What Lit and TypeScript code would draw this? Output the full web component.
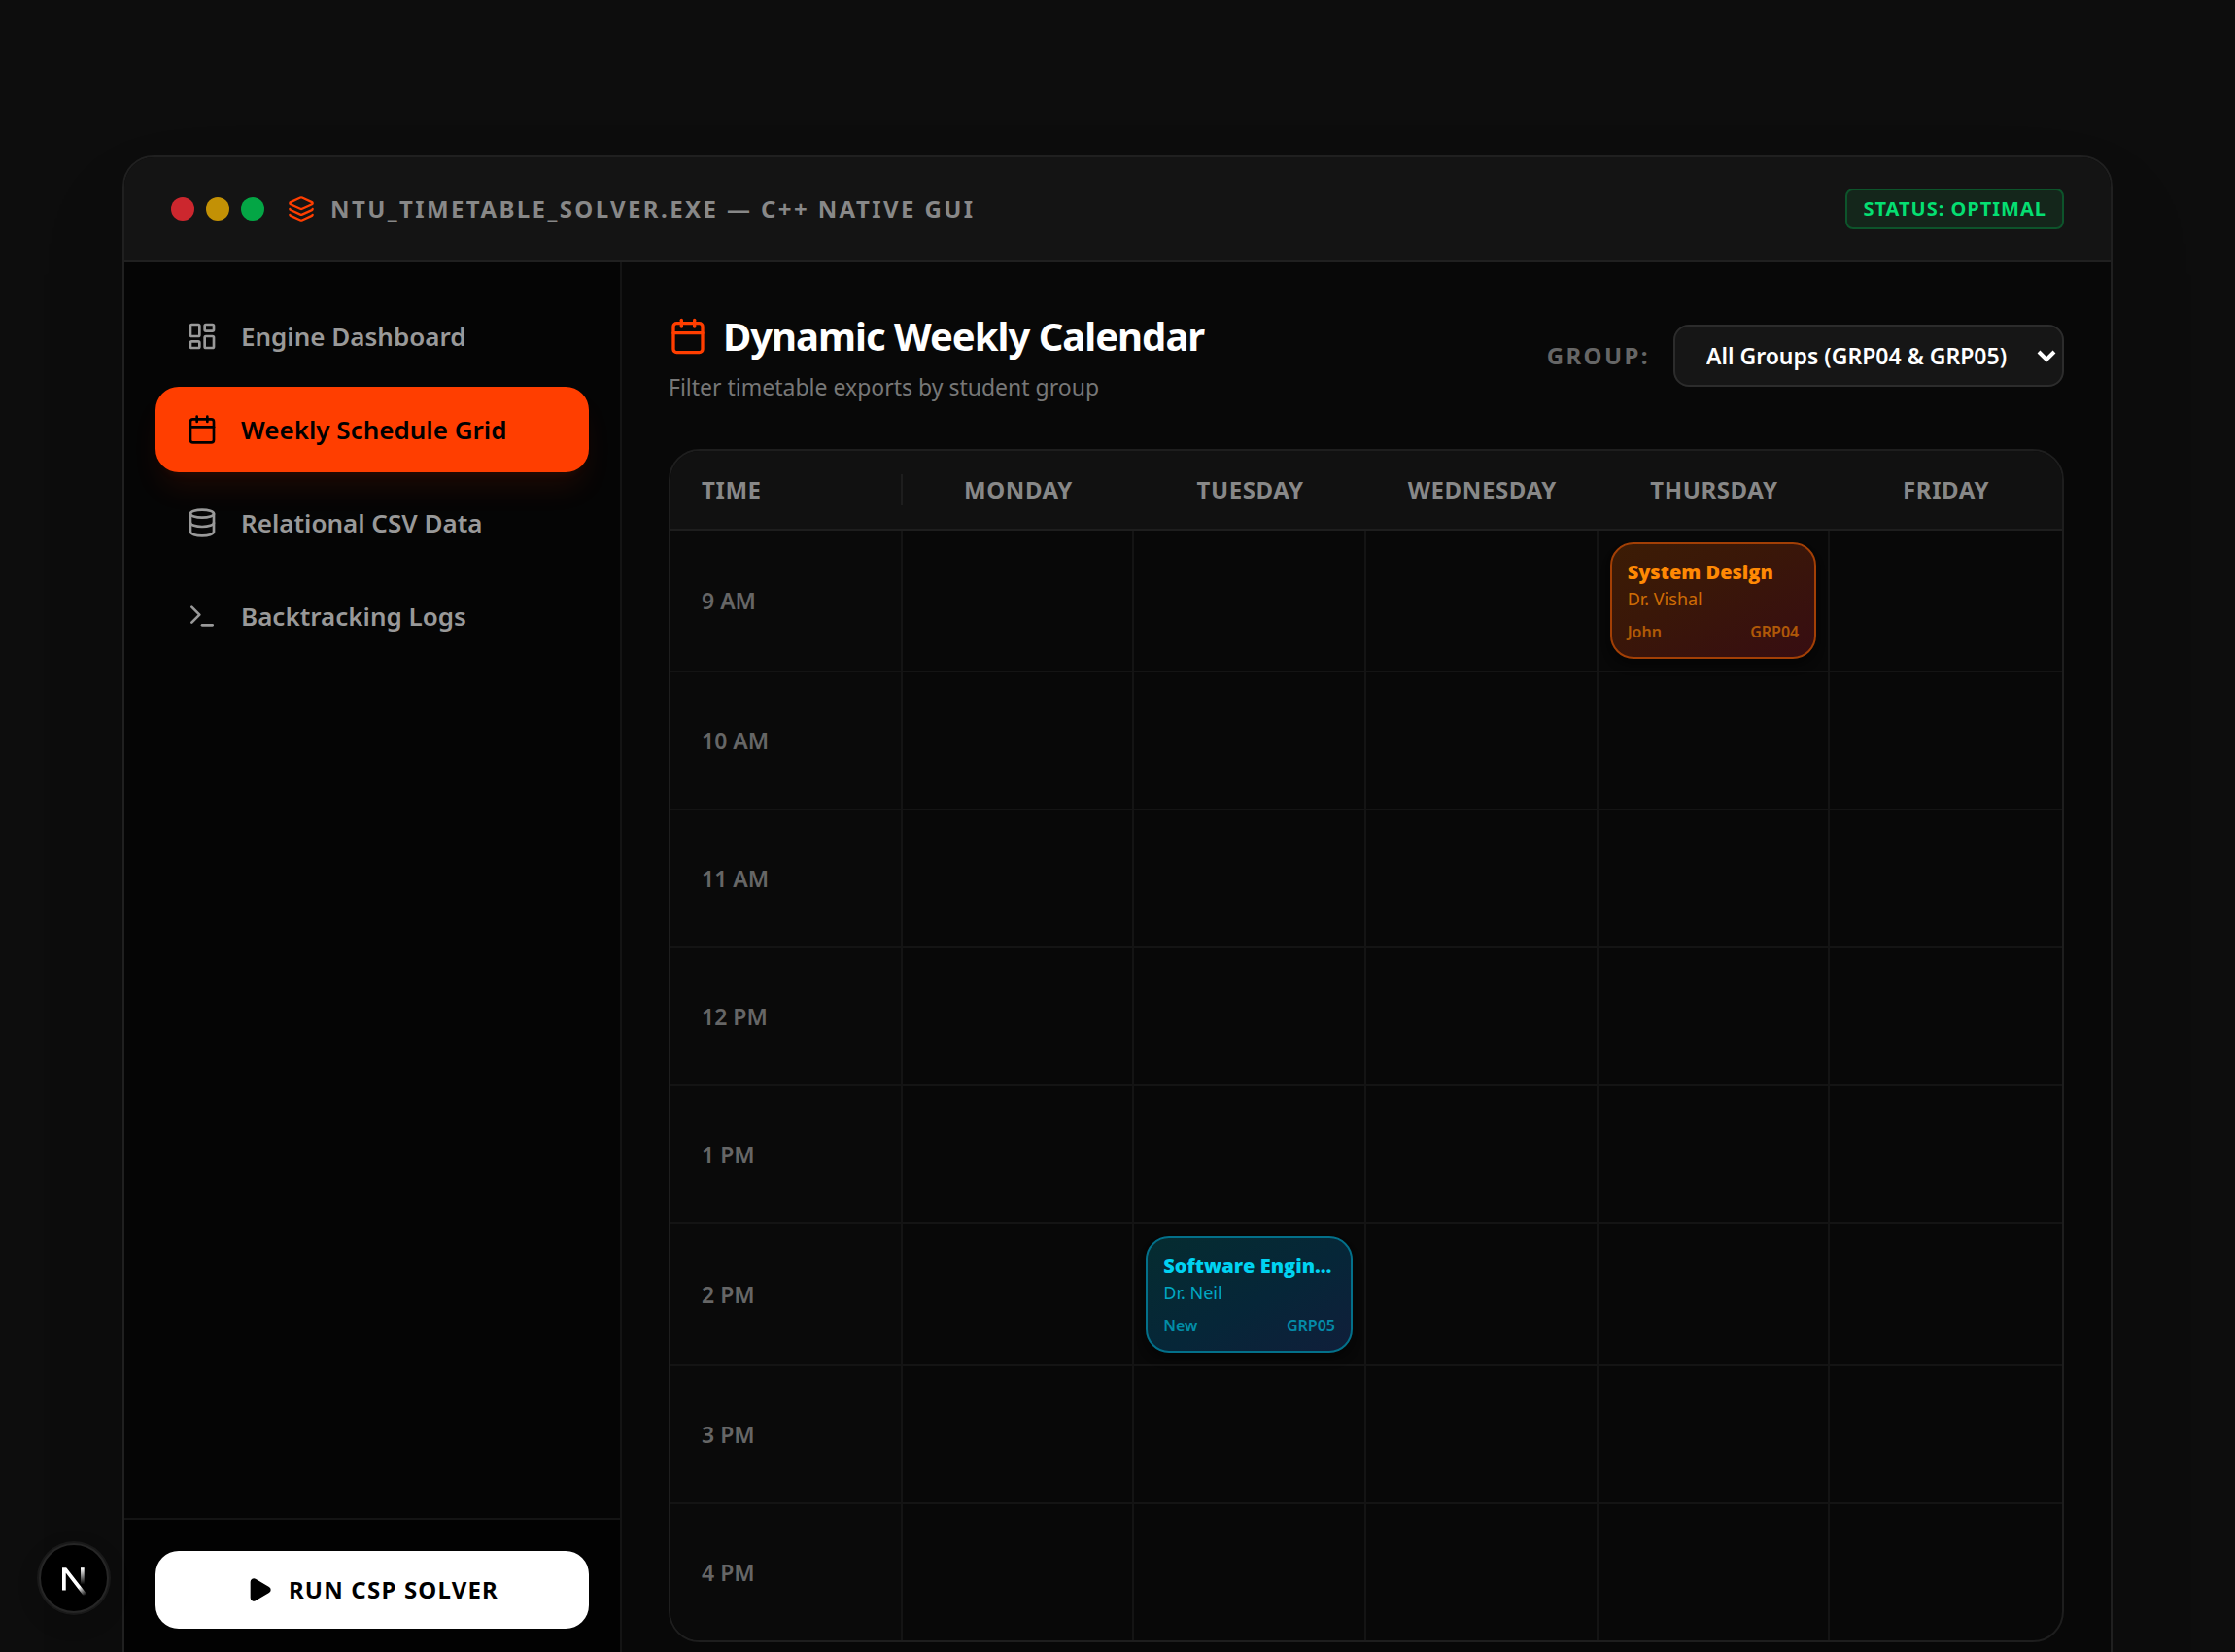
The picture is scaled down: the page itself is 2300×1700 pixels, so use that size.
import { LitElement, html, svg, css, nothing } from "lit";
import { customElement, property, state } from "lit/decorators.js";
import { classMap } from "lit/directives/class-map.js";

type IconName = "layers" | "dashboard" | "calendar" | "database" | "terminal" | "play";

const ICONS = {
  layers: svg`
    <path d="M12.83 2.18a2 2 0 0 0-1.66 0L2.6 6.08a1 1 0 0 0 0 1.83l8.58 3.91a2 2 0 0 0 1.66 0l8.58-3.9a1 1 0 0 0 0-1.83z"/>
    <path d="M2 12a1 1 0 0 0 .58.91l8.6 3.91a2 2 0 0 0 1.65 0l8.58-3.9A1 1 0 0 0 22 12"/>
    <path d="M2 17a1 1 0 0 0 .58.91l8.6 3.91a2 2 0 0 0 1.65 0l8.58-3.9A1 1 0 0 0 22 17"/>`,
  dashboard: svg`
    <rect width="7" height="9" x="3" y="3" rx="1"/>
    <rect width="7" height="5" x="14" y="3" rx="1"/>
    <rect width="7" height="9" x="14" y="12" rx="1"/>
    <rect width="7" height="5" x="3" y="16" rx="1"/>`,
  calendar: svg`
    <path d="M8 2v4"/><path d="M16 2v4"/>
    <rect width="18" height="18" x="3" y="4" rx="2"/>
    <path d="M3 10h18"/>`,
  database: svg`
    <ellipse cx="12" cy="5" rx="9" ry="3"/>
    <path d="M3 5V19A9 3 0 0 0 21 19V5"/>
    <path d="M3 12A9 3 0 0 0 21 12"/>`,
  terminal: svg`<path d="M12 19h8"/><path d="m4 17 6-6-6-6"/>`,
  play: svg`
    <path fill="currentColor" d="M5 5a2 2 0 0 1 3.008-1.728l11.997 6.998a2 2 0 0 1 .003 3.458l-12 7A2 2 0 0 1 5 19z"/>`,
};

@customElement("line-icon")
class LineIcon extends LitElement {
  @property() name: IconName = "layers";

  static styles = css`
    :host { display: block; flex: none; width: 32px; height: 32px; }
    svg { display: block; width: 100%; height: 100%; }
  `;

  render() {
    return html`<svg viewBox="0 0 24 24" fill="none" stroke="currentColor" stroke-width="2"
      stroke-linecap="round" stroke-linejoin="round" aria-hidden="true">${ICONS[this.name]}</svg>`;
  }
}

interface Lesson {
  day: string;
  hour: string;
  title: string;
  teacher: string;
  room: string;
  group: string;
  tone: "orange" | "cyan";
}

const DAYS = ["Monday", "Tuesday", "Wednesday", "Thursday", "Friday"];
const HOURS = ["9 AM", "10 AM", "11 AM", "12 PM", "1 PM", "2 PM", "3 PM", "4 PM"];

const LESSONS: Lesson[] = [
  { day: "Thursday", hour: "9 AM", title: "System Design", teacher: "Dr. Vishal", room: "John", group: "GRP04", tone: "orange" },
  { day: "Tuesday", hour: "2 PM", title: "Software Engineering", teacher: "Dr. Neil", room: "New", group: "GRP05", tone: "cyan" },
];

const NAV: { icon: IconName; label: string }[] = [
  { icon: "dashboard", label: "Engine Dashboard" },
  { icon: "calendar", label: "Weekly Schedule Grid" },
  { icon: "database", label: "Relational CSV Data" },
  { icon: "terminal", label: "Backtracking Logs" },
];

@customElement("week-table")
class WeekTable extends LitElement {
  @property() group = "all";

  static styles = css`
    :host { display: block; }
    .frame { border: 2px solid #1e1e1e; border-radius: 32px; overflow: hidden; }
    .grid { width: 100%; table-layout: fixed; border-collapse: separate; border-spacing: 0; }
    .head { height: 80px; padding: 0; background: #111; border-bottom: 2px solid #1e1e1e;
      color: #888; font-size: 24px; line-height: 32px; font-weight: 700; letter-spacing: 0.025em;
      text-transform: uppercase; text-align: center; }
    .corner { padding-left: 32px; text-align: left; border-right: 2px solid #1e1e1e; }
    .hour { box-sizing: border-box; height: 142px; padding: 0 0 0 32px; background: #0a0a0a; color: #666;
      font-size: 23px; line-height: 32px; font-weight: 600; text-align: left; }
    .slot { padding: 12px; vertical-align: top; }
    .hour, .slot { border-bottom: 2px solid #141414; border-right: 2px solid #141414; }
    .slot:last-child { border-right: 0; }
    .row:last-child .hour, .row:last-child .slot { border-bottom: 0; }
    .row:last-child .hour { height: 140px; }
    .card { box-sizing: border-box; height: 120px; padding: 16px 16px 14px; border: 2px solid; border-radius: 24px;
      display: flex; flex-direction: column;
      box-shadow: 0 8px 12px -2px rgba(0, 0, 0, 0.3), 0 4px 8px -4px rgba(0, 0, 0, 0.3); }
    .orange { color: #ff8904; border-color: #a23f05; background: linear-gradient(to bottom right, #3c1c05, #3a1708 40%, #370d12); }
    .cyan { color: #00d3f2; border-color: #03708a; background: linear-gradient(to bottom right, #052c30, #062638 55%, #101e3a); }
    .title { font-family: "Segoe UI", "Open Sans", sans-serif; font-size: 20px; line-height: 25px;
      font-weight: 800; overflow: hidden; white-space: nowrap; text-overflow: ellipsis; }
    .teacher { font-size: 18px; line-height: 27px; opacity: 0.75; margin-top: 2px; }
    .meta { display: flex; justify-content: space-between; margin-top: auto;
      font-size: 16px; line-height: 24px; font-weight: 600; opacity: 0.6; }
  `;

  private slotFor(day: string, hour: string) {
    const hit = LESSONS.find((l) => l.day === day && l.hour === hour && (this.group === "all" || l.group === this.group));
    if (!hit) return nothing;
    return html`<div class=${classMap({ card: true, [hit.tone]: true })}>
      <div class="title">${hit.title}</div>
      <div class="teacher">${hit.teacher}</div>
      <div class="meta"><span>${hit.room}</span><span>${hit.group}</span></div>
    </div>`;
  }

  render() {
    return html`<div class="frame">
      <table class="grid">
        <thead>
          <tr>
            <th class="head" scope="col"><div class="corner">Time</div></th>
            ${DAYS.map((d) => html`<th class="head" scope="col">${d}</th>`)}
          </tr>
        </thead>
        <tbody>
          ${HOURS.map((h) => html`<tr class="row">
            <th class="hour" scope="row">${h}</th>
            ${DAYS.map((d) => html`<td class="slot">${this.slotFor(d, h)}</td>`)}
          </tr>`)}
        </tbody>
      </table>
    </div>`;
  }
}

@customElement("app-root")
class AppRoot extends LitElement {
  @state() private active = "Weekly Schedule Grid";
  @state() private group = "all";

  static styles = css`
    :host { display: block; font-family: "Segoe UI", "Noto Sans", "Open Sans", sans-serif; color: #fff; }
    .page { box-sizing: border-box; position: relative; height: 100vh; overflow: hidden;
      padding: 160px 40px 0; background: #0d0d0d; }
    .window { box-sizing: border-box; max-width: 2048px; margin: 0 auto; border: 2px solid #202020;
      border-radius: 32px; overflow: hidden; background: #080808;
      box-shadow: 0 50px 100px -24px rgba(0, 0, 0, 0.25); }
    .titlebar { display: flex; align-items: center; justify-content: space-between; padding: 32px 48px;
      background: #141414; border-bottom: 2px solid #202020; }
    .caption { display: flex; align-items: center; gap: 24px; }
    .lights { display: flex; gap: 12px; }
    .light { width: 24px; height: 24px; border-radius: 50%; }
    .red { background: #cc272e; }
    .yellow { background: #c39105; }
    .green { background: #04a645; }
    .program { display: flex; align-items: center; gap: 16px; color: #888; font-size: 24px;
      line-height: 32px; font-weight: 700; letter-spacing: 0.1em; }
    .program-icon { width: 28px; height: 28px; color: #ff3e00; }
    .status { padding: 4px 16px; border: 2px solid #0d542b; border-radius: 8px; background: #14261b;
      color: #05df72; font-size: 20px; line-height: 30px; font-weight: 700; letter-spacing: 0.05em; }
    .body { display: grid; grid-template-columns: 512px minmax(0, 1fr); }
    .sidebar { display: flex; flex-direction: column; justify-content: space-between;
      border-right: 2px solid #141414; background: #050505; }
    .nav { display: flex; flex-direction: column; gap: 8px; padding: 32px; }
    .nav-item { display: flex; align-items: center; gap: 24px; height: 88px; padding: 0 32px; border: 0;
      border-radius: 24px; background: none; color: #999; font: inherit; font-size: 26px;
      line-height: 40px; font-weight: 600; text-align: left; cursor: pointer; }
    .nav-item.on { background: #ff3e00; color: #000;
      box-shadow: 0 20px 30px -6px rgba(255, 62, 0, 0.1), 0 8px 12px -8px rgba(255, 62, 0, 0.1); }
    .runbox { padding: 32px 32px 62px; border-top: 2px solid #141414; background: #020202; }
    .run { display: flex; align-items: center; justify-content: center; gap: 16px; width: 100%; height: 80px;
      border: 0; border-radius: 24px; background: #fff; color: #000; font: inherit; font-size: 24px;
      line-height: 32px; font-weight: 700; letter-spacing: 0.05em; cursor: pointer; }
    .run-icon { width: 28px; height: 28px; }
    .main { padding: 48px; }
    .top { display: flex; align-items: center; justify-content: space-between; margin-bottom: 48px; }
    .heading { display: flex; align-items: center; gap: 16px; margin: 0; font-size: 40px;
      line-height: 56px; font-weight: 700; letter-spacing: -0.025em; }
    .heading-icon { width: 40px; height: 40px; color: #ff3e00; }
    .hint { margin: 8px 0 0; color: #777; font-size: 23px; line-height: 32px; }
    .filter { display: flex; align-items: center; gap: 24px; }
    .filter-label { color: #666; font-size: 24px; line-height: 32px; font-weight: 700; letter-spacing: 0.1em; }
    .picker { display: grid; align-items: center; }
    .select { grid-area: 1 / 1; height: 64px; padding: 0 56px 0 32px; border: 2px solid #2c2c2c;
      border-radius: 16px; background: #161616; color: #fff; font: inherit; font-size: 23px;
      font-weight: 600; appearance: none; }
    .chevron { grid-area: 1 / 1; justify-self: end; width: 20px; height: 16px; margin-right: 8px; pointer-events: none; }
    .badge { position: absolute; left: 40px; bottom: 40px; width: 72px; height: 72px; padding: 0;
      border: 2px solid #262626; border-radius: 50%; background: #000;
      box-shadow: 0 0 0 2px #191919, 0 8px 24px rgba(0, 0, 0, 0.15); }
    .badge-mark { display: block; width: 68px; height: 68px; }
  `;

  render() {
    return html`<div class="page">
      <div class="window">
        <header class="titlebar">
          <div class="caption">
            <div class="lights">
              <span class="light red"></span><span class="light yellow"></span><span class="light green"></span>
            </div>
            <div class="program">
              <line-icon class="program-icon" name="layers"></line-icon>
              <span>NTU_TIMETABLE_SOLVER.EXE — C++ NATIVE GUI</span>
            </div>
          </div>
          <span class="status">STATUS: OPTIMAL</span>
        </header>
        <div class="body">
          <aside class="sidebar">
            <nav class="nav">
              ${NAV.map((n) => html`<button class=${classMap({ "nav-item": true, on: n.label === this.active })}
                @click=${() => (this.active = n.label)}>
                <line-icon name=${n.icon}></line-icon><span>${n.label}</span>
              </button>`)}
            </nav>
            <div class="runbox">
              <button class="run"><line-icon class="run-icon" name="play"></line-icon><span>RUN CSP SOLVER</span></button>
            </div>
          </aside>
          <main class="main">
            <div class="top">
              <div>
                <h2 class="heading"><line-icon class="heading-icon" name="calendar"></line-icon><span>Dynamic Weekly Calendar</span></h2>
                <p class="hint">Filter timetable exports by student group</p>
              </div>
              <div class="filter">
                <label class="filter-label" for="group">GROUP:</label>
                <div class="picker">
                  <select class="select" id="group" @change=${(e: Event) => (this.group = (e.target as HTMLSelectElement).value)}>
                    <option value="all">All Groups (GRP04 &amp; GRP05)</option>
                    <option value="GRP04">GRP04</option>
                    <option value="GRP05">GRP05</option>
                  </select>
                  <svg class="chevron" viewBox="0 0 20 16" fill="none" stroke="#fff" stroke-width="4" aria-hidden="true">
                    <path d="M2 4l8 8 8-8"/>
                  </svg>
                </div>
              </div>
            </div>
            <week-table .group=${this.group}></week-table>
          </main>
        </div>
      </div>
      <button class="badge" aria-label="Open developer tools">
        <svg class="badge-mark" viewBox="0 0 34 34" fill="none" stroke-width="1.86" aria-hidden="true">
          <defs>
            <linearGradient id="fade-a" gradientUnits="userSpaceOnUse" x1="9.956" y1="11.123" x2="15.478" y2="17.967">
              <stop stop-color="#fff"/><stop offset="0.604" stop-color="#fff" stop-opacity="0"/>
            </linearGradient>
            <linearGradient id="fade-b" gradientUnits="userSpaceOnUse" x1="11.822" y1="1.4" x2="11.791" y2="9.625">
              <stop stop-color="#fff"/><stop offset="1" stop-color="#fff" stop-opacity="0"/>
            </linearGradient>
            <clipPath id="mark-box"><path d="M1.4 1H13.6V15.2H1.4z"/></clipPath>
          </defs>
          <g transform="translate(9.6 10.6)">
            <path d="M13.3 15.2L2.34 1V12.6" stroke="url(#fade-a)" clip-path="url(#mark-box)"/>
            <path d="M11.825 1V13.1" stroke="url(#fade-b)"/>
          </g>
        </svg>
      </button>
    </div>`;
  }
}
